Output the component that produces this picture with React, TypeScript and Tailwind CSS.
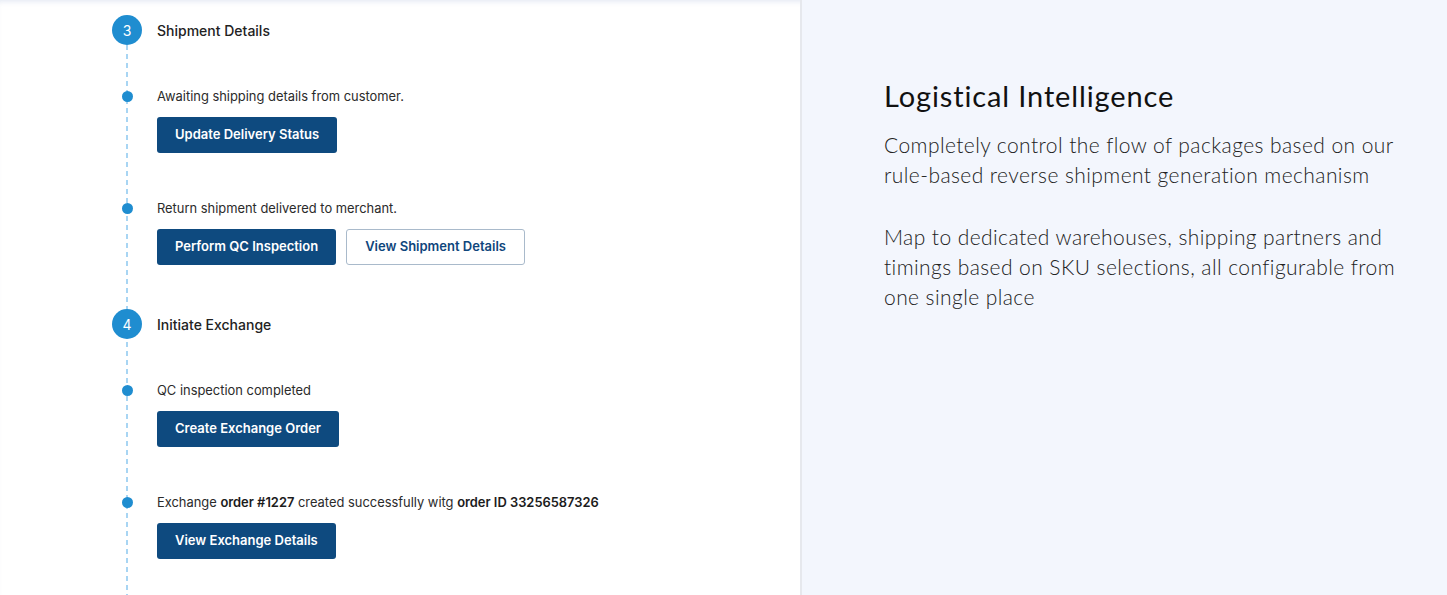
import React from "react";

type Item = {
  text: React.ReactNode;
  buttons: { label: string; outline?: boolean }[];
};

type Step = {
  num: number;
  title: string;
  items: Item[];
};

const steps: Step[] = [
  {
    num: 3,
    title: "Shipment Details",
    items: [
      {
        text: "Awaiting shipping details from customer.",
        buttons: [{ label: "Update Delivery Status" }],
      },
      {
        text: "Return shipment delivered to merchant.",
        buttons: [
          { label: "Perform QC Inspection" },
          { label: "View Shipment Details", outline: true },
        ],
      },
    ],
  },
  {
    num: 4,
    title: "Initiate Exchange",
    items: [
      {
        text: "QC inspection completed",
        buttons: [{ label: "Create Exchange Order" }],
      },
      {
        text: (
          <>
            Exchange <b className="font-semibold text-[#1c1c1c]">order #1227</b> created
            successfully witg <b className="font-semibold text-[#1c1c1c]">order ID 33256587326</b>
          </>
        ),
        buttons: [{ label: "View Exchange Details" }],
      },
    ],
  },
];

const Btn = ({ label, outline }: { label: string; outline?: boolean }) => (
  <button
    className={
      outline
        ? "h-[36px] px-[18px] rounded-[3px] border border-[#a9bacb] bg-white text-[#0f467c] text-[13px] font-semibold"
        : "h-[36px] px-[18px] rounded-[3px] bg-[#0e4a7f] text-white text-[13px] font-semibold"
    }
  >
    {label}
  </button>
);

const App = () => {
  return (
    <div
      className="flex w-[1447px] h-[595px] overflow-hidden shadow-[inset_0_5px_5px_-3px_rgba(200,210,230,0.45)]"
      style={{ fontFamily: "Inter, Roboto, 'Liberation Sans', sans-serif" }}
    >
      {/* timeline */}
      <div className="w-[802px] shrink-0 border-r-2 border-[#e6e8ed] pl-[112px] pt-[15px]">
        <div className="relative">
          {/* dashed line behind the steps */}
          <div className="absolute left-[14px] top-[30px] w-[1.5px] h-[600px] bg-[repeating-linear-gradient(to_bottom,#a8d5f3_0_5px,transparent_5px_9px)]" />
          <div className="relative flex flex-col">
            {steps.map((step, si) => (
              <div key={step.num} className={si > 0 ? "mt-[44px]" : ""}>
                <div className="flex items-center gap-[15px] h-[30px]">
                  <div className="w-[30px] h-[30px] rounded-full bg-[#1f8dd0] text-white text-[14px] flex items-center justify-center">
                    {step.num}
                  </div>
                  <span className="text-[14px] font-medium text-[#222]">{step.title}</span>
                </div>
                {step.items.map((item, ii) => (
                  <div key={ii} className={`flex gap-[15px] ${ii === 0 ? "mt-[42px]" : "mt-[46px]"}`}>
                    <div className="w-[30px] shrink-0 flex justify-center pt-[4px]">
                      <div className="w-[11px] h-[11px] rounded-full bg-[#1f8dd0]" />
                    </div>
                    <div>
                      <p className="text-[12.9px] leading-[20px] text-[#2b2b2b]">{item.text}</p>
                      <div className="flex gap-[10px] mt-[10px]">
                        {item.buttons.map((b) => (
                          <Btn key={b.label} label={b.label} outline={b.outline} />
                        ))}
                      </div>
                    </div>
                  </div>
                ))}
              </div>
            ))}
          </div>
        </div>
      </div>

      {/* info panel */}
      <div
        className="flex-1 bg-[#f3f6fd] pl-[82px] pt-[78px]"
        style={{ fontFamily: "Lato, 'Open Sans', sans-serif" }}
      >
        <h2 className="text-[29px] leading-[36px] tracking-[0.03em] text-[#111] font-normal">
          Logistical Intelligence
        </h2>
        <div className="mt-[16px] max-w-[530px] text-[21px] leading-[30px] tracking-[0.02em] font-light text-[#222]">
          <p>Completely control the flow of packages based on our rule-based reverse shipment generation mechanism</p>
          <p className="mt-[32px]">
            Map to dedicated warehouses, shipping partners and timings based on SKU selections, all configurable from
            one single place
          </p>
        </div>
      </div>
    </div>
  );
};

export default App;
